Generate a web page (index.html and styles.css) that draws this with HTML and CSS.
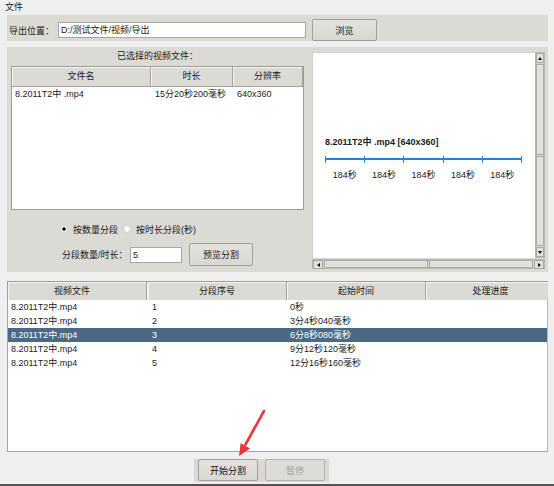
FILE: index.html
```html
<!DOCTYPE html>
<html>
<head>
<meta charset="utf-8">
<link rel="stylesheet" href="styles.css">
</head>
<body>
<div class="app">
  <div class="menu">文件</div>

  <div class="export-bar">
    <span class="export-label">导出位置：</span>
    <div class="textbox export-input">D:/测试文件/视频/导出</div>
    <button class="btn browse">浏览</button>
  </div>

  <div class="main-panel">
    <div class="left-col">
      <div class="section-title">已选择的视频文件：</div>
      <div class="file-table">
        <div class="ft-head">
          <div class="hcell">文件名</div>
          <div class="hcell">时长</div>
          <div class="hcell">分辨率</div>
        </div>
        <div class="ft-row">
          <div class="c1">8.2011T2中 .mp4</div>
          <div class="c2">15分20秒200毫秒</div>
          <div class="c2">640x360</div>
        </div>
      </div>
      <div class="radio-row">
        <span class="radio checked"></span><span class="radio-text">按数量分段</span>
        <span class="radio"></span><span class="radio-text">按时长分段(秒)</span>
      </div>
      <div class="count-row">
        <span class="count-label">分段数量/时长：</span>
        <div class="textbox count-input">5</div>
        <button class="btn preview">预览分割</button>
      </div>
    </div>

    <div class="preview-box">
      <div class="canvas">
        <div class="cv-title">8.2011T2中 .mp4 [640x360]</div>
        <div class="timeline">
          <div class="seg"></div><div class="seg"></div><div class="seg"></div><div class="seg"></div><div class="seg"></div>
        </div>
        <div class="labels">
          <span>184秒</span><span>184秒</span><span>184秒</span><span>184秒</span><span>184秒</span>
        </div>
      </div>
      <div class="vscroll">
        <div class="sb-btn"><span class="tri up"></span></div>
        <div class="thumb v"><span class="grip-v"></span></div>
        <div class="sb-btn"><span class="tri down"></span></div>
      </div>
      <div class="hscroll">
        <div class="sb-btn"><span class="tri left"></span></div>
        <div class="thumb h"><span class="grip-h"></span></div>
        <div class="sb-btn"><span class="tri right"></span></div>
      </div>
    </div>
  </div>

  <div class="result">
    <div class="rt-head">
      <div class="hcell first">视频文件</div>
      <div class="hcell">分段序号</div>
      <div class="hcell">起始时间</div>
      <div class="hcell last">处理进度</div>
    </div>
    <div class="rt-body">
      <div class="rt-row"><div>8.2011T2中.mp4</div><div>1</div><div>0秒</div><div></div></div>
      <div class="rt-row"><div>8.2011T2中.mp4</div><div>2</div><div>3分4秒040毫秒</div><div></div></div>
      <div class="rt-row sel"><div>8.2011T2中.mp4</div><div>3</div><div>6分8秒080毫秒</div><div></div></div>
      <div class="rt-row"><div>8.2011T2中.mp4</div><div>4</div><div>9分12秒120毫秒</div><div></div></div>
      <div class="rt-row"><div>8.2011T2中.mp4</div><div>5</div><div>12分16秒160毫秒</div><div></div></div>
    </div>
  </div>

  <div class="actions">
    <button class="btn start">开始分割</button>
    <button class="btn pause">暂停</button>
  </div>

  <div class="bottom-line"></div>

  <svg class="arrow" width="40" height="56" viewBox="0 0 40 56">
    <line x1="34" y1="6" x2="15.5" y2="39.5" stroke="#e8373c" stroke-width="2.6" stroke-linecap="round"/>
    <polygon points="9,51 20,43.5 10.6,38" fill="#e8373c"/>
  </svg>
</div>
</body>
</html>
```

FILE: styles.css
```css
* { box-sizing: border-box; }
html, body { margin: 0; padding: 0; }
body {
  width: 554px;
  height: 486px;
  overflow: hidden;
  background: #efefef;
  font-family: "Liberation Sans", "Noto Sans CJK SC", sans-serif;
  font-size: 9px;
  color: #1b1b1b;
}
.app {
  position: relative;
  display: flex;
  flex-direction: column;
  width: 554px;
  height: 486px;
}
.menu { height: 15px; line-height: 15px; padding-left: 5px; }

.export-bar {
  height: 26px;
  margin: 0 6px 0 7px;
  background: #dcdad5;
  display: flex;
  align-items: center;
  padding: 4px 0 0 2px;
}
.export-label { width: 49px; flex: none; }
.textbox {
  background: #fff;
  border: 1px solid #a8a6a1;
  height: 16px;
  line-height: 14px;
  padding-left: 2px;
  white-space: nowrap;
}
.export-input { width: 248px; flex: none; }
.btn {
  font: inherit;
  color: inherit;
  height: 22px;
  border: 1px solid #a29f9a;
  border-radius: 2px;
  background: linear-gradient(#e4e2de, #d9d7d2);
  padding: 0;
  flex: none;
}
.browse { width: 65px; margin-left: 6px; }

.main-panel {
  height: 225px;
  margin: 6px 6px 0 7px;
  background: #dcdad5;
  display: flex;
}
.left-col { width: 301px; flex: none; display: flex; flex-direction: column; }
.section-title { height: 19px; line-height: 19px; text-align: center; }
.file-table {
  margin-left: 4px;
  width: 293px;
  height: 144px;
  background: #fff;
  border: 1px solid #9e9c97;
}
.ft-head, .ft-row { display: grid; grid-template-columns: 139px 82px 1fr; }
.ft-head { height: 20px; }
.hcell {
  background: #dcdad5;
  border-right: 1px solid #a5a29d;
  border-bottom: 1px solid #a5a29d;
  box-shadow: inset 1px 1px 0 #f6f5f3;
  text-align: center;
  line-height: 19px;
  white-space: nowrap;
}
.ft-row { height: 14px; line-height: 14px; white-space: nowrap; }
.ft-row .c1 { padding-left: 3px; }
.ft-row .c2 { padding-left: 4px; }

.radio-row {
  margin-top: 12px;
  height: 14px;
  display: flex;
  align-items: center;
  padding-left: 53px;
}
.radio {
  width: 8px;
  height: 8px;
  border-radius: 50%;
  border: 1px solid #cfcdc8;
  background: #fff;
  flex: none;
}
.radio.checked { background: radial-gradient(circle, #111 0 1.4px, #fff 2px); border-color: #d8d6d1; }
.radio-text { margin: 0 5px; }

.count-row {
  margin-top: 7px;
  height: 23px;
  display: flex;
  align-items: center;
  padding-left: 55px;
}
.count-label { width: 68px; flex: none; }
.count-input { width: 52px; flex: none; }
.preview { width: 64px; height: 23px; margin-left: 7px; }

.preview-box {
  margin: 5px 3px 0 4px;
  width: 233px;
  height: 217px;
  display: grid;
  grid-template-columns: 223px 10px;
  grid-template-rows: 206px 11px;
}
.canvas {
  background: #fff;
  padding: 84px 0 0 13px;
  box-shadow: inset 1px 1px 0 #d2d0cb;
}
.cv-title { font-weight: bold; line-height: 12px; white-space: nowrap; }
.timeline { margin-top: 8px; width: 197px; height: 7px; display: flex; }
.seg {
  flex: 1;
  border-left: 1px solid #2c7fd5;
  background: linear-gradient(transparent 2.5px, #2c7fd5 2.5px, #2c7fd5 4.3px, transparent 4.3px);
}
.seg:last-child { border-right: 1px solid #2c7fd5; }
.labels { margin-top: 6px; width: 197px; display: flex; }
.labels span { flex: 1; text-align: center; line-height: 12px; color: #222; }

.vscroll, .hscroll {
  background: #d4d2cd;
  border: 1px solid #b9b7b2;
  display: flex;
}
.vscroll { flex-direction: column; }
.hscroll { grid-column: 1 / span 2; margin-top: 1px; }
.sb-btn {
  flex: none;
  width: 8px;
  height: 8px;
  background: #e2e0dc;
  border: 1px solid #a9a7a2;
  display: flex;
  align-items: center;
  justify-content: center;
}
.vscroll .sb-btn { width: 8px; height: 10px; }
.hscroll .sb-btn { width: 10px; height: 9px; }
.tri { width: 0; height: 0; border: 2.5px solid transparent; }
.tri.up { border-bottom: 3px solid #111; border-top-width: 0; }
.tri.down { border-top: 3px solid #111; border-bottom-width: 0; }
.tri.left { border-right: 3px solid #111; border-left-width: 0; }
.tri.right { border-left: 3px solid #111; border-right-width: 0; }
.thumb {
  flex: 1;
  background: #e2e0dc;
  border: 1px solid #aeaca7;
  display: flex;
  align-items: center;
  justify-content: center;
}
.thumb.v { margin: 1px 0; }
.thumb.h { margin: 0 1px; }
.grip-v { width: 6px; height: 3px; border-top: 1px solid #a3a19c; border-bottom: 1px solid #a3a19c; }
.grip-h { width: 3px; height: 7px; border-left: 1px solid #a3a19c; border-right: 1px solid #a3a19c; }

.result {
  margin: 9px 6px 0 7px;
  height: 171px;
  display: flex;
  flex-direction: column;
}
.rt-head, .rt-row { display: grid; grid-template-columns: 140px 139px 139px 1fr; }
.rt-head {
  height: 19px;
  border-top: 1px solid #9e9c97;
  border-left: 1px solid #9e9c97;
}
.rt-head .hcell { line-height: 18px; }
.rt-head .hcell.first { width: 139px; padding-right: 10px; }
.rt-head .hcell.last { padding-left: 7px; border-right: none; }
.rt-body {
  flex: 1;
  background: #fff;
  border-left: 1px solid #a8a6a1;
  border-right: 1px solid #b8b6b1;
  border-bottom: 1px solid #a8a6a1;
}
.rt-row { height: 14px; line-height: 14px; white-space: nowrap; }
.rt-row > div:first-child { padding-left: 3px; }
.rt-row > div:nth-child(2) { padding-left: 4px; }
.rt-row > div:nth-child(3) { padding-left: 3px; }
.rt-row.sel { background: #4a6984; color: #fff; }

.actions {
  margin: 7px 0 0 194px;
  width: 135px;
  height: 23px;
  padding: 0 4px;
  display: flex;
  gap: 7px;
  background: #dad8d3;
}
.start { width: 60px; color: #111; }
.pause { width: 60px; color: #a3a19c; background: #dddbd7; border-color: #b3b1ac; }

.bottom-line { margin-top: 2px; height: 2px; background: #4e535a; }

.arrow { position: absolute; left: 230px; top: 405px; }
```
